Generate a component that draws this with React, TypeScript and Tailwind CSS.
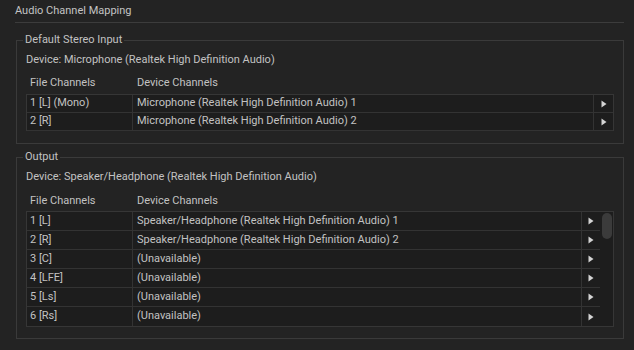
import React from "react";

type Row = { file: string; device: string };

const inputRows: Row[] = [
  { file: "1 [L] (Mono)", device: "Microphone (Realtek High Definition Audio) 1" },
  { file: "2 [R]", device: "Microphone (Realtek High Definition Audio) 2" },
];

const outputRows: Row[] = [
  { file: "1 [L]", device: "Speaker/Headphone (Realtek High Definition Audio) 1" },
  { file: "2 [R]", device: "Speaker/Headphone (Realtek High Definition Audio) 2" },
  { file: "3 [C]", device: "(Unavailable)" },
  { file: "4 [LFE]", device: "(Unavailable)" },
  { file: "5 [Ls]", device: "(Unavailable)" },
  { file: "6 [Rs]", device: "(Unavailable)" },
];

const Arrow = () => (
  <svg width="6" height="8" viewBox="0 0 6 8">
    <path d="M0.5 0.5 L5.5 4 L0.5 7.5 Z" fill="#d4d4d4" />
  </svg>
);

const TableHeader = () => (
  <div className="flex leading-[14px]">
    <div className="w-[107px] pl-[4px]">File Channels</div>
    <div className="pl-[4px]">Device Channels</div>
  </div>
);

const ChannelRow = ({ row, height, arrowWidth }: { row: Row; height: string; arrowWidth: string }) => (
  <div className={`flex items-stretch border-b border-[#333333] bg-[#1d1d1d] ${height}`}>
    <div className="w-[106px] shrink-0 flex items-center pl-[3px] border-r border-[#333333]">{row.file}</div>
    <div className="flex-1 flex items-center pl-[4px]">{row.device}</div>
    <div className={`${arrowWidth} shrink-0 flex items-center justify-center border-l border-[#333333]`}>
      <Arrow />
    </div>
  </div>
);

const Group = ({ label, children, className }: { label: string; children: React.ReactNode; className: string }) => (
  <fieldset className={`ml-[16px] w-[608px] border border-[#3a3a3a] px-[9px] ${className}`}>
    <legend className="-ml-[3px] px-[2px] leading-[14px]">{label}</legend>
    {children}
  </fieldset>
);

export default function App() {
  return (
    <div
      className="w-[634px] h-[350px] overflow-hidden bg-[#232323] text-[11px] text-[#c2c2c2]"
      style={{ fontFamily: "Roboto, 'Liberation Sans', sans-serif" }}
    >
      <div className="pl-[15px] pt-[4px] leading-[14px] text-[#c4c4c4]">Audio Channel Mapping</div>
      <div className="ml-[15px] mt-[4px] w-[609px] h-px bg-[#3c3c3c]" />

      {/* input */}
      <Group label="Default Stereo Input" className="mt-[10px] pb-[12px]">
        <div className="mt-[6px] leading-[14px]">Device: Microphone (Realtek High Definition Audio)</div>
        <div className="mt-[9px]">
          <TableHeader />
        </div>
        <div className="mt-[4px] border-x border-t border-[#363636]">
          {inputRows.map((r) => (
            <ChannelRow key={r.file} row={r} height="h-[18px]" arrowWidth="w-[20px]" />
          ))}
        </div>
      </Group>

      {/* output */}
      <Group label="Output" className="mt-[6px] pb-[11px]">
        <div className="mt-[6px] leading-[14px]">Device: Speaker/Headphone (Realtek High Definition Audio)</div>
        <div className="mt-[10px]">
          <TableHeader />
        </div>
        <div className="mt-[3px] flex border border-[#363636] bg-[#1f1f1f]">
          <div className="flex-1">
            {outputRows.map((r, i) => (
              <div key={r.file} className={i === outputRows.length - 1 ? "[&>div]:border-b-0" : ""}>
                <ChannelRow row={r} height="h-[19px]" arrowWidth="w-[19px]" />
              </div>
            ))}
          </div>
          <div className="w-[13px] shrink-0 pl-[2px] pt-[1px] bg-[#1d1d1d]">
            <div className="w-[10px] h-[26px] rounded-full bg-[#3b3b3b]" />
          </div>
        </div>
      </Group>
    </div>
  );
}
